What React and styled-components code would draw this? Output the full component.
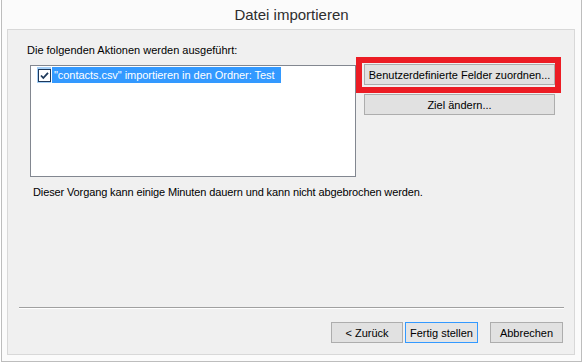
import React from 'react';
import styled, { createGlobalStyle } from 'styled-components';

const Global = createGlobalStyle`
  html, body { margin: 0; padding: 0; background: #ffffff; }
  body {
    font-family: "Liberation Sans", Arial, sans-serif;
    font-size: 11px;
    color: #000;
  }
`;

const Window = styled.div`
  box-sizing: border-box;
  width: 581px;
  height: 362px;
  margin-left: 1px;
  background: #fbfbfb;
  border: 1px solid #bdbdbd;
  border-top: none;
  display: flex;
  flex-direction: column;
`;

const TitleBar = styled.div`
  height: 29px;
  display: flex;
  align-items: center;
  justify-content: center;
  font-size: 15px;
  color: #2e2e2e;
`;

const Panel = styled.div`
  box-sizing: border-box;
  height: 326px;
  margin: 0 6px 0 5px;
  border: 1px solid #d8d8d8;
  background: #f0f0f0;
  display: flex;
  flex-direction: column;
`;

const Label = styled.div`
  margin: 13px 0 0 19px;
  line-height: 15px;
  white-space: nowrap;
`;

const MainRow = styled.div`
  display: flex;
  align-items: flex-start;
  gap: 8px;
  margin: 7px 0 0 22px;
`;

const ListBox = styled.div`
  box-sizing: border-box;
  width: 326px;
  height: 112px;
  border: 1px solid #828790;
  background: #fff;
  padding: 1px 0 0 6px;
`;

const ListRow = styled.div`
  display: flex;
  align-items: stretch;
  height: 16px;
`;

const CheckCell = styled.div`
  width: 14px;
  background: #a6d0f7;
  display: flex;
  align-items: center;
  justify-content: center;
`;

const RowText = styled.span`
  margin-left: 1px;
  padding: 0 6px 0 2px;
  line-height: 16px;
  letter-spacing: -0.05px;
  background: ${p => (p.$selected ? '#3399ff' : 'transparent')};
  color: ${p => (p.$selected ? '#fff' : '#000')};
  white-space: nowrap;
`;

const ButtonColumn = styled.div`
  display: flex;
  flex-direction: column;
  gap: 9px;
  margin-top: -1px;
  width: 191px;
`;

const Highlight = styled.div`
  position: relative;
  &::after {
    content: '';
    position: absolute;
    top: -7px;
    left: -8px;
    right: -6px;
    bottom: -8px;
    border: 6px solid #ec1c24;
    pointer-events: none;
  }
`;

const Button = styled.button`
  box-sizing: border-box;
  width: ${p => p.$w || 191}px;
  height: 21px;
  margin: 0;
  padding: 0;
  border: 1px solid ${p => (p.$primary ? '#3399ff' : '#adadad')};
  background: ${p => (p.$primary ? '#e5e5e5' : '#e1e1e1')};
  font-family: inherit;
  font-size: 11px;
  color: #000;
  white-space: nowrap;
  display: flex;
  align-items: center;
  justify-content: center;
`;

const Note = styled.div`
  margin: 8px 0 0 25px;
  line-height: 15px;
  letter-spacing: -0.12px;
  white-space: nowrap;
`;

const Spacer = styled.div`
  flex: 1;
`;

const Separator = styled.div`
  margin: 0 10px 0 11px;
  border-top: 1px solid #a0a0a0;
  border-bottom: 1px solid #ffffff;
`;

const Footer = styled.div`
  display: flex;
  justify-content: flex-end;
  margin: 13px 11px 11px 0;
`;

const FooterButton = styled(Button)`
  margin-right: ${p => p.$gap || 0}px;
`;

function CheckIcon() {
  return (
    <svg width="13" height="13" viewBox="0 0 13 13">
      <rect x="0.5" y="0.5" width="12" height="12" fill="#ffffff" stroke="#1e395b" />
      <path d="M3 6.5 L5.3 9 L10 3.8" fill="none" stroke="#1e395b" strokeWidth="1.8" />
    </svg>
  );
}

export default function App() {
  return (
    <>
      <Global />
      <Window>
        <TitleBar>Datei importieren</TitleBar>
        <Panel>
          <Label>Die folgenden Aktionen werden ausgeführt:</Label>
          <MainRow>
            <ListBox>
              <ListRow>
                <CheckCell>
                  <CheckIcon />
                </CheckCell>
                <RowText $selected>"contacts.csv" importieren in den Ordner: Test</RowText>
              </ListRow>
            </ListBox>
            <ButtonColumn>
              <Highlight>
                <Button>Benutzerdefinierte Felder zuordnen...</Button>
              </Highlight>
              <Button>Ziel ändern...</Button>
            </ButtonColumn>
          </MainRow>
          <Note>Dieser Vorgang kann einige Minuten dauern und kann nicht abgebrochen werden.</Note>
          <Spacer />
          <Separator />
          <Footer>
            <FooterButton $w={72} $gap={2}>&lt; Zurück</FooterButton>
            <FooterButton $w={73} $gap={12} $primary>Fertig stellen</FooterButton>
            <FooterButton $w={73}>Abbrechen</FooterButton>
          </Footer>
        </Panel>
      </Window>
    </>
  );
}
